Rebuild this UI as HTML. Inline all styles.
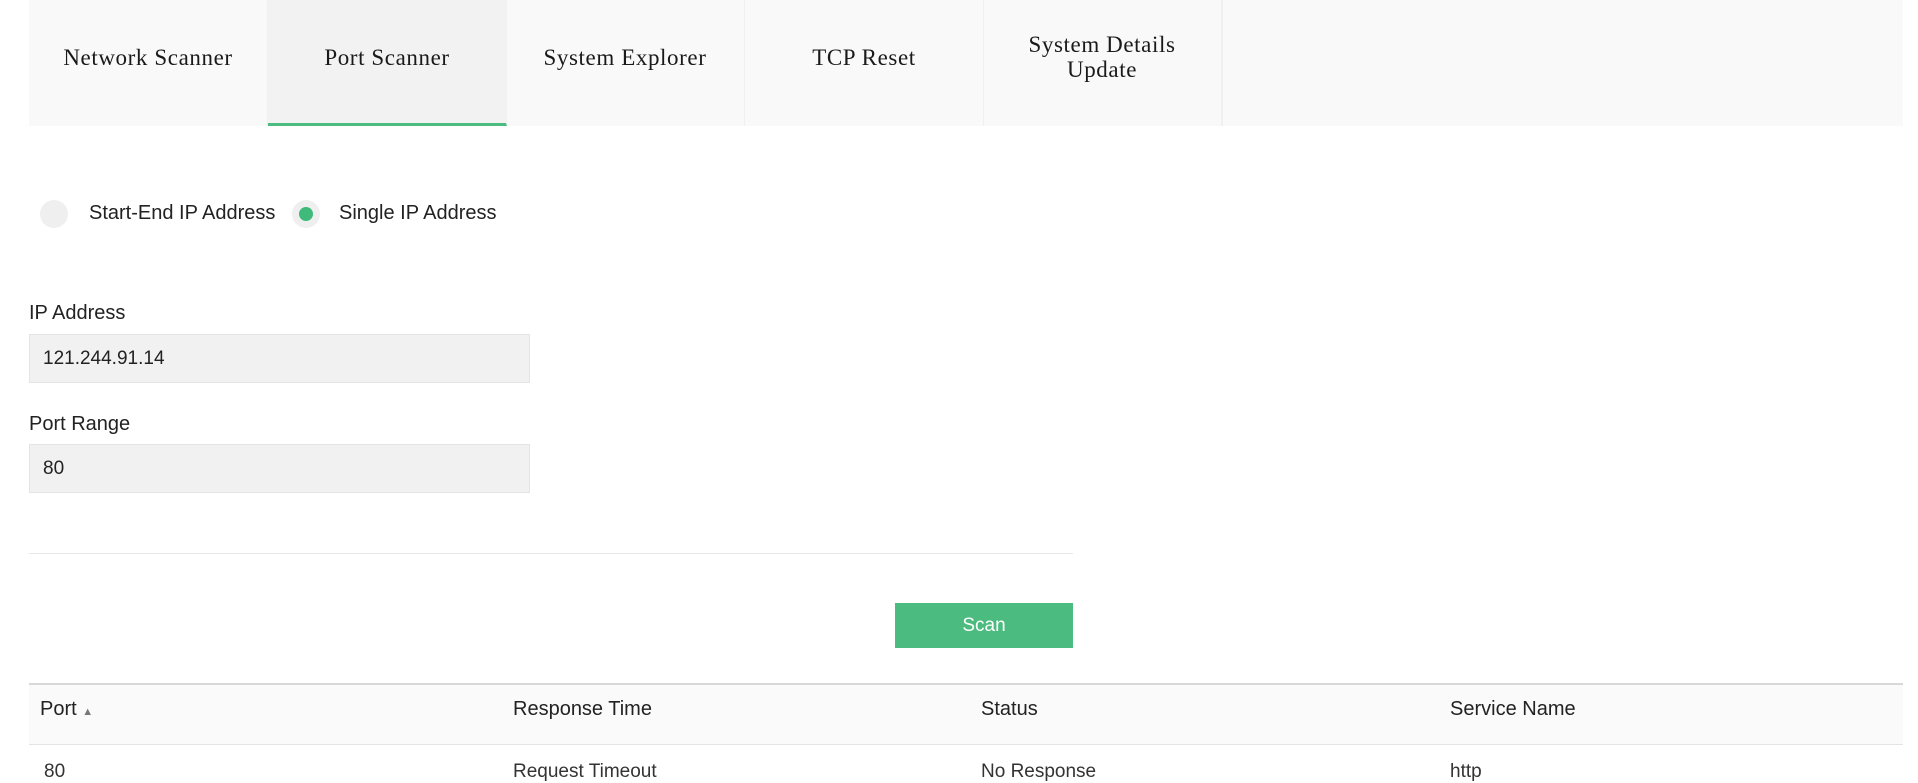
<!DOCTYPE html>
<html><head><meta charset="utf-8"><style>
*{box-sizing:border-box;margin:0;padding:0}
body{width:1918px;height:783px;background:#fff;position:relative;overflow:hidden;font-family:"Liberation Sans",sans-serif;color:#222}
.tabs{position:absolute;left:29px;top:0;width:1874px;height:126px;background:#f9f9f9}
.tab{position:absolute;top:0;height:126px;width:239px;display:flex;align-items:center;justify-content:center;text-align:center;font-family:"Liberation Serif",serif;font-size:23px;line-height:25px;letter-spacing:0.6px;color:#1a1a1a;border-right:1px solid #f0f0f0;padding-bottom:12px}
.tab.active{background:#f2f2f2;border-bottom:3px solid #4cbb7f;padding-bottom:9px}
.radio{position:absolute;width:28px;height:28px;border-radius:50%;background:#efefef;top:200px}
.radio.on::after{content:"";position:absolute;left:7px;top:7px;width:14px;height:14px;border-radius:50%;background:#3fba7a}
.lbl{position:absolute;font-size:20px;color:#222}
.input{position:absolute;left:29px;width:501px;height:49px;background:#f1f1f1;border:1px solid #e4e4e4;font-size:19px;padding:13px 13px}
.th{position:absolute;top:698px;font-size:20px;color:#222}
.td{position:absolute;top:761px;font-size:19px;color:#333}
</style></head><body>
<div class="tabs">
<div class="tab" style="left:0">Network Scanner</div>
<div class="tab active" style="left:239px">Port Scanner</div>
<div class="tab" style="left:477px">System Explorer</div>
<div class="tab" style="left:716px">TCP Reset</div>
<div class="tab" style="left:954px">System Details<br>Update</div>
<div class="tab" style="left:1193px;width:1px"></div>
</div>
<div class="radio" style="left:40px"></div>
<div class="lbl" style="left:89px;top:202px">Start-End IP Address</div>
<div class="radio on" style="left:292px"></div>
<div class="lbl" style="left:339px;top:202px">Single IP Address</div>
<div class="lbl" style="left:29px;top:302px">IP Address</div>
<div class="input" style="top:334px">121.244.91.14</div>
<div class="lbl" style="left:29px;top:413px">Port Range</div>
<div class="input" style="top:444px">80</div>
<div style="position:absolute;left:29px;top:553px;width:1044px;height:1px;background:#e8e8e8"></div>
<div style="position:absolute;left:895px;top:603px;width:178px;height:45px;background:#4cbb7f;color:#fff;font-size:19px;display:flex;align-items:center;justify-content:center">Scan</div>
<div style="position:absolute;left:29px;top:683px;width:1874px;height:62px;background:#fafafa;border-top:2px solid #d8d8d8;border-bottom:1px solid #e4e4e4"></div>
<div class="th" style="left:40px">Port <span style="font-size:11px;color:#777">▲</span></div>
<div class="th" style="left:513px">Response Time</div>
<div class="th" style="left:981px">Status</div>
<div class="th" style="left:1450px">Service Name</div>
<div class="td" style="left:44px">80</div>
<div class="td" style="left:513px">Request Timeout</div>
<div class="td" style="left:981px">No Response</div>
<div class="td" style="left:1450px">http</div>
</body></html>
